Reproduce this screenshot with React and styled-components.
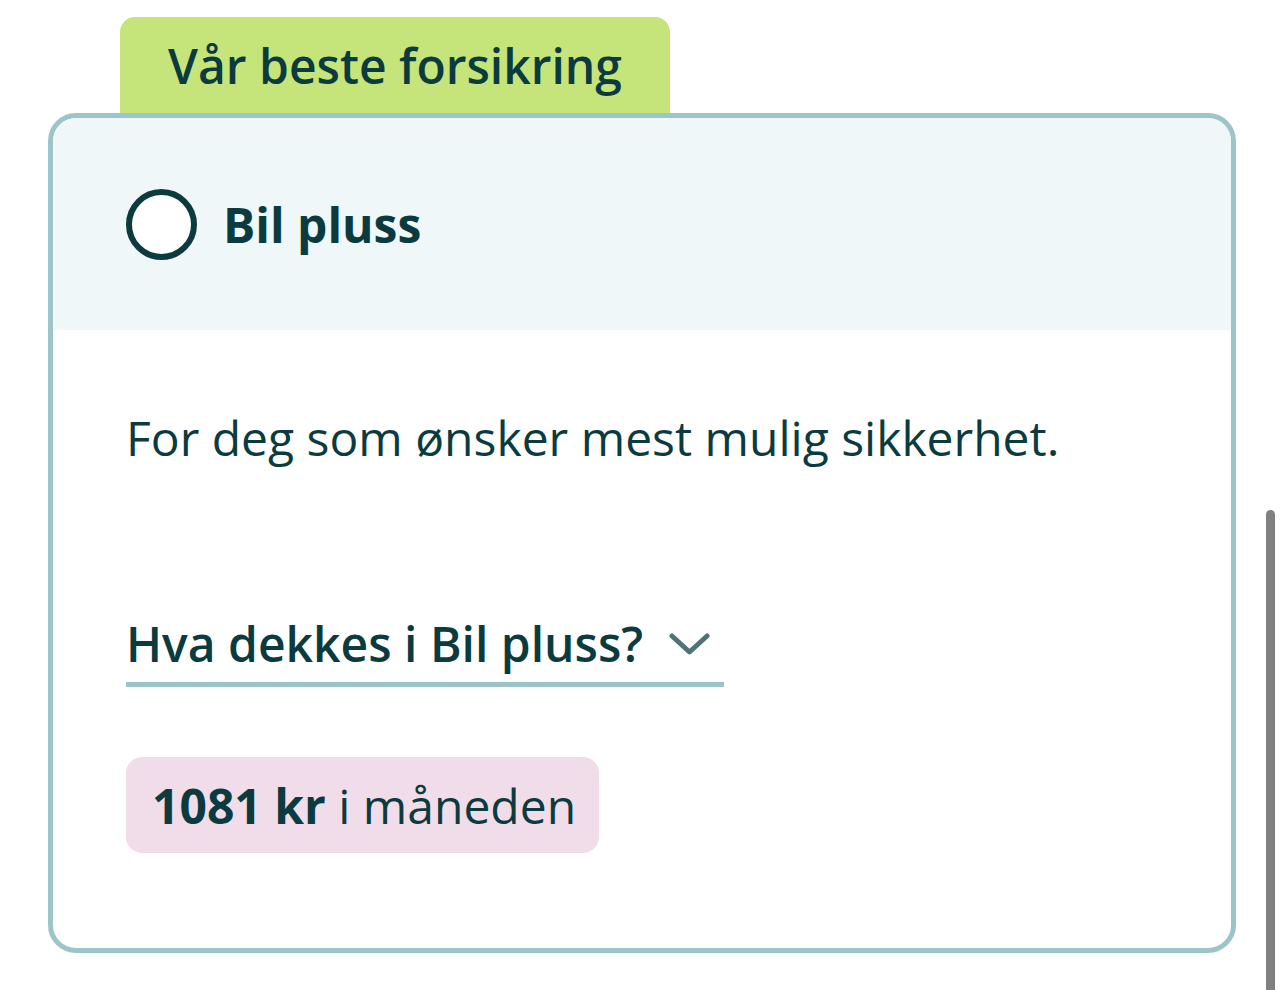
import React from 'react';
import styled, { createGlobalStyle } from 'styled-components';

const GlobalStyle = createGlobalStyle`
  html, body {
    margin: 0;
    padding: 0;
    background: #ffffff;
    font-family: "Open Sans", "Noto Sans", sans-serif;
    color: #0b3b3e;
  }
`;

const Page = styled.div`
  position: relative;
  width: 1284px;
  height: 990px;
  overflow: hidden;
  padding: 17px 0 0 48px;
  box-sizing: border-box;
`;

const Wrapper = styled.div`
  width: 1188px;
  display: flex;
  flex-direction: column;
  align-items: flex-start;
`;

const Tab = styled.div`
  margin-left: 72px;
  width: 550px;
  height: 96px;
  box-sizing: border-box;
  background: #c5e57a;
  border-radius: 15px 15px 0 0;
  display: flex;
  align-items: center;
  justify-content: center;
  font-size: 48px;
  font-weight: 600;
  color: #0b3b3e;
`;

const Card = styled.div`
  width: 100%;
  box-sizing: border-box;
  border: 5px solid #9bc5c9;
  border-radius: 28px;
  overflow: hidden;
  background: #ffffff;
`;

const Header = styled.label`
  height: 212px;
  background: #eff7f9;
  display: flex;
  align-items: center;
  gap: 26px;
  padding-left: 73px;
  cursor: pointer;
`;

const Radio = styled.span`
  width: 71px;
  height: 71px;
  box-sizing: border-box;
  border: 6px solid #0b3b3e;
  border-radius: 50%;
  background: #ffffff;
  flex-shrink: 0;
`;

const Title = styled.span`
  font-size: 48px;
  font-weight: 700;
`;

const Body = styled.div`
  padding: 78px 0 95px 73px;
  display: flex;
  flex-direction: column;
  align-items: flex-start;
`;

const Description = styled.p`
  margin: 0;
  font-size: 48px;
  line-height: 60px;
`;

const Toggle = styled.button`
  margin-top: 143px;
  display: flex;
  align-items: center;
  gap: 26px;
  padding: 0 14px 6px 0;
  background: none;
  border: none;
  border-bottom: 5px solid #9bc5c9;
  font-family: inherit;
  font-size: 48px;
  font-weight: 600;
  color: #0b3b3e;
  cursor: pointer;
`;

const Price = styled.div`
  margin-top: 70px;
  background: #f0dde9;
  border-radius: 16px;
  padding: 0 23px 0 26px;
  height: 96px;
  display: flex;
  align-items: center;
  font-size: 48px;
  color: #0b3b3e;
  white-space: pre;

  b {
    font-weight: 700;
  }
`;

const Scrollbar = styled.div`
  position: absolute;
  right: 9px;
  top: 510px;
  width: 9px;
  height: 500px;
  border-radius: 5px;
  background: #808080;
`;

const Chevron = () => (
  <svg width="41" height="24" viewBox="0 0 41 24" fill="none">
    <path d="M3 4 L20.5 20 L38 4" stroke="#4f7477" strokeWidth="5" strokeLinecap="round" strokeLinejoin="round" />
  </svg>
);

export default function App() {
  return (
    <Page>
      <GlobalStyle />
      <Wrapper>
        <Tab>Vår beste forsikring</Tab>
        <Card>
          <Header>
            <Radio />
            <Title>Bil pluss</Title>
          </Header>
          <Body>
            <Description>For deg som ønsker mest mulig sikkerhet.</Description>
            <Toggle>
              Hva dekkes i Bil pluss?
              <Chevron />
            </Toggle>
            <Price>
              <b>1081 kr</b> i måneden
            </Price>
          </Body>
        </Card>
      </Wrapper>
      <Scrollbar />
    </Page>
  );
}
